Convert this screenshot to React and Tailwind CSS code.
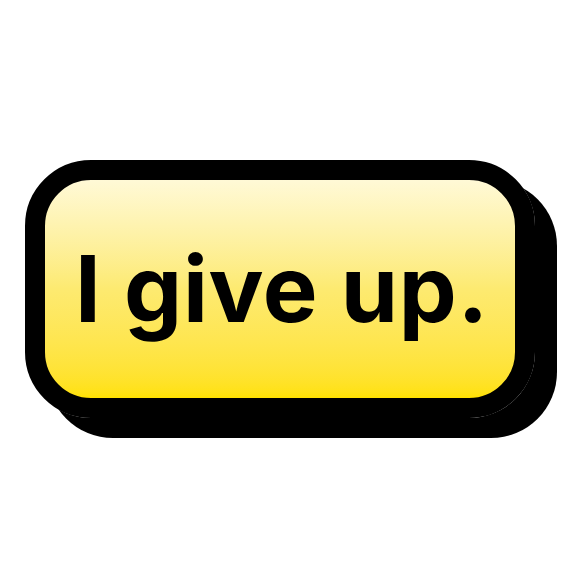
import React from 'react';

const App = () => {
  return (
    <div className="w-[580px] h-[580px] bg-white pt-[160px] pl-[25px]">
      <button
        className="w-[510px] h-[258px] rounded-[66px] border-[20px] border-black shadow-[22px_20px_0_0_#000] bg-gradient-to-b from-[#fff9d6] via-[#fdea70] to-[#ffe100] flex items-center justify-center"
      >
        <span
          className="text-[92px] font-[650] text-black leading-none tracking-[0.008em] pl-[4px]"
          style={{ fontFamily: 'Inter, "Noto Sans", sans-serif' }}
        >
          I give up.
        </span>
      </button>
    </div>
  );
};

export default App;
